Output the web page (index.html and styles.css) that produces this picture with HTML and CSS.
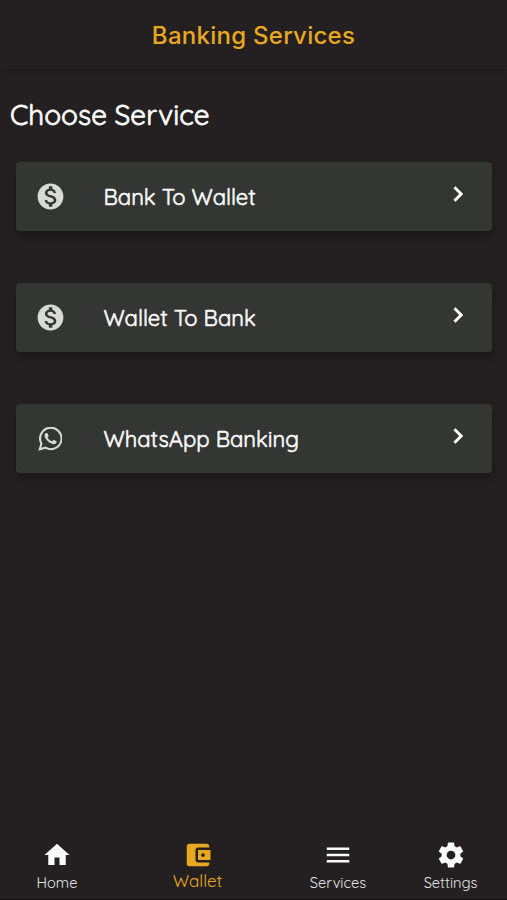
FILE: index.html
```html
<!DOCTYPE html>
<html lang="en">
<head>
<meta charset="utf-8">
<title>Banking Services</title>
<link rel="stylesheet" href="styles.css">
</head>
<body>
<header class="topbar"><h1>Banking Services</h1></header>
<main>
  <h2>Choose Service</h2>
  <div class="cards">
    <a class="card">
      <svg class="lead" viewBox="0 0 24 24"><path d="M12 2C6.48 2 2 6.48 2 12s4.48 10 10 10 10-4.48 10-10S17.52 2 12 2zm1.41 16.09V20h-2.67v-1.93c-1.71-.36-3.16-1.46-3.27-3.4h1.96c.1 1.05.82 1.87 2.65 1.87 1.96 0 2.4-.98 2.4-1.59 0-.83-.44-1.61-2.67-2.14-2.48-.6-4.18-1.62-4.18-3.67 0-1.72 1.39-2.84 3.11-3.21V4h2.67v1.95c1.86.45 2.79 1.86 2.85 3.39H14.3c-.05-1.11-.64-1.87-2.22-1.87-1.5 0-2.4.68-2.4 1.64 0 .84.65 1.39 2.67 1.91s4.18 1.39 4.18 3.91c-.01 1.83-1.38 2.83-3.12 3.16z"/></svg>
      <span class="label">Bank To Wallet</span>
      <svg class="chevron" viewBox="0 0 24 24"><path d="M10 6 8.59 7.41 13.17 12l-4.58 4.59L10 18l6-6z"/></svg>
    </a>
    <a class="card">
      <svg class="lead" viewBox="0 0 24 24"><path d="M12 2C6.48 2 2 6.48 2 12s4.48 10 10 10 10-4.48 10-10S17.52 2 12 2zm1.41 16.09V20h-2.67v-1.93c-1.71-.36-3.16-1.46-3.27-3.4h1.96c.1 1.05.82 1.87 2.65 1.87 1.96 0 2.4-.98 2.4-1.59 0-.83-.44-1.61-2.67-2.14-2.48-.6-4.18-1.62-4.18-3.67 0-1.72 1.39-2.84 3.11-3.21V4h2.67v1.95c1.86.45 2.79 1.86 2.85 3.39H14.3c-.05-1.11-.64-1.87-2.22-1.87-1.5 0-2.4.68-2.4 1.64 0 .84.65 1.39 2.67 1.91s4.18 1.39 4.18 3.91c-.01 1.83-1.38 2.83-3.12 3.16z"/></svg>
      <span class="label">Wallet To Bank</span>
      <svg class="chevron" viewBox="0 0 24 24"><path d="M10 6 8.59 7.41 13.17 12l-4.58 4.59L10 18l6-6z"/></svg>
    </a>
    <a class="card">
      <svg class="lead whatsapp" viewBox="0 0 24 24"><path class="bubble" d="M1.3 22.7 2.9 17A10.7 10.7 0 1 1 7 21.2z"/><path d="M17.5 14.4c-.3-.15-1.76-.87-2.03-.97-.27-.1-.47-.15-.67.15-.2.3-.77.97-.94 1.16-.18.2-.35.23-.65.08-.3-.15-1.25-.46-2.39-1.48-.88-.79-1.48-1.76-1.65-2.06-.17-.3-.02-.46.13-.6.13-.14.3-.35.45-.53.15-.17.2-.3.3-.5.1-.2.05-.37-.03-.52-.07-.15-.67-1.61-.91-2.2-.24-.58-.49-.5-.67-.51h-.57c-.2 0-.52.07-.8.37-.27.3-1.03 1.02-1.03 2.48s1.06 2.87 1.21 3.07c.15.2 2.1 3.2 5.08 4.49.7.3 1.26.49 1.69.62.71.23 1.36.2 1.87.12.57-.09 1.76-.72 2.01-1.41.25-.7.25-1.29.17-1.41-.07-.13-.27-.2-.57-.35z"/></svg>
      <span class="label">WhatsApp Banking</span>
      <svg class="chevron" viewBox="0 0 24 24"><path d="M10 6 8.59 7.41 13.17 12l-4.58 4.59L10 18l6-6z"/></svg>
    </a>
  </div>
</main>
<nav class="tabs">
  <a class="tab home"><svg viewBox="0 0 24 24"><path d="M10 20v-6h4v6h5v-8h3L12 3 2 12h3v8z"/></svg><span>Home</span></a>
  <a class="tab wallet"><svg viewBox="0 0 24 24"><path d="M21 18v1c0 1.1-.9 2-2 2H5c-1.11 0-2-.9-2-2V5c0-1.1.89-2 2-2h14c1.1 0 2 .9 2 2v1h-9c-1.11 0-2 .9-2 2v8c0 1.1.89 2 2 2h9zm-9-2h10V8H12v8zm4-2.5c-.83 0-1.5-.67-1.5-1.5s.67-1.5 1.5-1.5 1.5.67 1.5 1.5-.67 1.5-1.5 1.5z"/></svg><span>Wallet</span></a>
  <a class="tab services"><svg viewBox="0 0 24 24"><path d="M3 18h18v-2H3zm0-5h18v-2H3zm0-7v2h18V6z"/></svg><span>Services</span></a>
  <a class="tab settings"><svg viewBox="0 0 24 24"><path d="M19.43 12.98c.04-.32.07-.64.07-.98s-.03-.66-.07-.98l2.11-1.65c.19-.15.24-.42.12-.64l-2-3.46c-.12-.22-.39-.3-.61-.22l-2.49 1c-.52-.4-1.08-.73-1.69-.98l-.38-2.65C14.46 2.18 14.25 2 14 2h-4c-.25 0-.46.18-.49.42l-.38 2.65c-.61.25-1.17.59-1.69.98l-2.49-1c-.23-.09-.49 0-.61.22l-2 3.46c-.13.22-.07.49.12.64l2.11 1.65c-.04.32-.07.65-.07.98s.03.66.07.98l-2.11 1.65c-.19.15-.24.42-.12.64l2 3.46c.12.22.39.3.61.22l2.49-1c.52.4 1.08.73 1.69.98l.38 2.65c.03.24.24.42.49.42h4c.25 0 .46-.18.49-.42l.38-2.65c.61-.25 1.17-.59 1.69-.98l2.49 1c.23.09.49 0 .61-.22l2-3.46c.12-.22.07-.49-.12-.64zM12 15.5c-1.93 0-3.5-1.57-3.5-3.5s1.57-3.5 3.5-3.5 3.5 1.57 3.5 3.5-1.57 3.5-3.5 3.5z"/></svg><span>Settings</span></a>
</nav>
</body>
</html>
```
FILE: styles.css
```css
* { box-sizing: border-box; }
body {
  margin: 0;
  height: 900px;
  display: flex;
  flex-direction: column;
  overflow: hidden;
  background: #242021;
  color: #fafafa;
  font-family: Quicksand, Lato, sans-serif;
}
svg { display: block; fill: currentColor; flex: none; }
.topbar {
  height: 69px;
  flex: none;
  display: flex;
  justify-content: center;
  box-shadow: 0 1px 4px rgba(0, 0, 0, .3);
}
h1 {
  margin: 21px 0 0;
  font: 500 24px/30px Inter, sans-serif;
  letter-spacing: .27px;
  color: #e9a820;
  white-space: nowrap;
}
main { flex: 1; }
h2 {
  margin: 28px 0 0 10px;
  font-size: 28px;
  line-height: 36px;
  font-weight: 400;
  -webkit-text-stroke: .8px currentColor;
}
.cards {
  display: grid;
  gap: 52.7px;
  margin: 29.4px 15px 0 15.5px;
}
.card {
  height: 68.3px;
  display: flex;
  align-items: center;
  padding: 0 19px;
  border-radius: 4px;
  background: #343633;
  box-shadow: 1px 6px 10px rgba(0, 0, 0, .28);
}
.lead { width: 31px; height: 31px; color: #d9d9d9; }
.whatsapp { padding: 3.5px; }
.bubble { fill: none; stroke: currentColor; stroke-width: 2.1; }
.label {
  flex: 1;
  margin-left: 38px;
  font-size: 22px;
  line-height: 30px;
  padding-top: 1px;
  -webkit-text-stroke: .6px currentColor;
}
.chevron {
  width: 30px;
  height: 30px;
  margin: 0 0 5px;
  color: #fff;
  stroke: currentColor;
  stroke-width: .4;
}
.tabs {
  height: 72px;
  flex: none;
  display: grid;
  grid-template-columns: 114px 167px 114px 111px;
  padding-top: 12px;
  border-bottom: 1px solid #111;
}
.tab { display: flex; flex-direction: column; align-items: center; }
.tab svg { width: 30px; height: 30px; }
.tab span { font-size: 14.6px; line-height: 20px; margin-top: 3px; color: #e3e3e3; }
.tab.wallet { color: #e9a820; }
.tab.wallet span { color: #e9a820; font-size: 17px; margin-top: 1px; }
```
